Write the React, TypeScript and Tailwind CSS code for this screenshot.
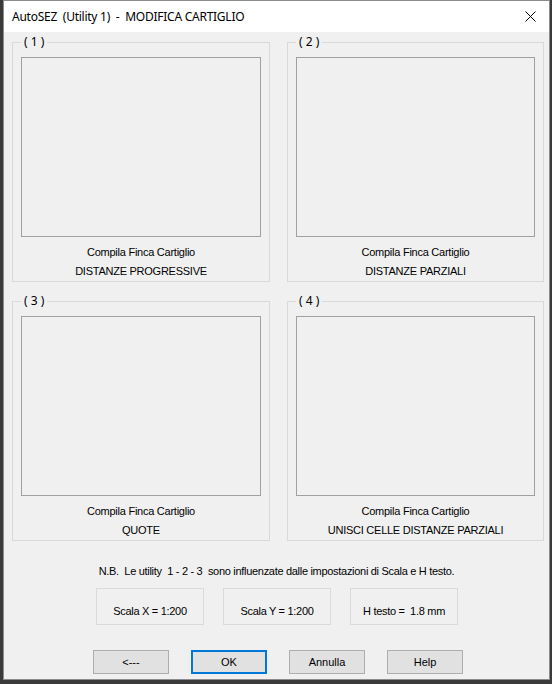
import React from "react";

const ui = { fontFamily: '"Liberation Sans", Arial, sans-serif' };
const title = { fontFamily: '"Noto Sans", "Open Sans", sans-serif' };

function Group({ n, line2 }: { n: string; line2: string }) {
  return (
    <div className="relative border border-[#d9d9d9] pt-[14px] pb-0 px-[8px] flex flex-col">
      <div
        className="absolute left-[8px] -top-[9px] px-[3px] bg-[#f0f0f0] text-[12px] leading-[16px] text-black whitespace-pre"
        style={title}
      >
        {`( ${n} )`}
      </div>
      <div className="h-[180px] border border-[#a0a0a0] bg-[#f0f0f0]" />
      <div className="mt-[6px] flex flex-col items-center text-[11px] leading-[19px] tracking-[-0.25px] text-black" style={ui}>
        <div>Compila Finca Cartiglio</div>
        <div>{line2}</div>
      </div>
    </div>
  );
}

function InfoBox({ children }: { children: React.ReactNode }) {
  return (
    <div className="w-[108px] h-[37px] border border-[#dadada] flex justify-center pt-[14px] text-[11px] leading-[16px] tracking-[-0.3px] text-black whitespace-pre" style={ui}>
      {children}
    </div>
  );
}

function Btn({ children, active }: { children: React.ReactNode; active?: boolean }) {
  return (
    <div
      className={
        active
          ? "w-[76px] h-[24px] border-2 border-[#0078d7] bg-[#e1e1e1] flex items-center justify-center text-[11px] text-black"
          : "w-[76px] h-[24px] border border-[#adadad] bg-[#e1e1e1] flex items-center justify-center text-[11px] text-black"
      }
      style={ui}
    >
      {children}
    </div>
  );
}

export default function App() {
  return (
    <div className="w-[552px] h-[684px] bg-[#3a3a3a] pl-[3px] pr-[2px] pb-[4px] flex flex-col">
      <div className="flex-1 border border-[#8c8c8c] flex flex-col bg-[#f0f0f0]">
        <div className="h-[31px] bg-white flex items-center pl-[8px] pr-[9px] shrink-0">
          <div className="text-[12px] leading-[16px] tracking-[-0.25px] text-black whitespace-pre" style={title}>
            {"AutoSEZ  (Utility 1)  -  MODIFICA CARTIGLIO"}
          </div>
          <div className="ml-auto w-[20px] h-[20px] flex items-center justify-center">
            <svg width="11" height="11" viewBox="0 0 11 11">
              <path d="M0.5 0.5 L10.5 10.5 M10.5 0.5 L0.5 10.5" stroke="#000" strokeWidth="1" />
            </svg>
          </div>
        </div>
        <div className="flex-1 flex flex-col pt-[10px]">
          <div className="pl-[8px] grid grid-cols-[258px_257px] gap-x-[17px] gap-y-[19px]">
            <Group n="1" line2="DISTANZE PROGRESSIVE" />
            <Group n="2" line2="DISTANZE PARZIALI" />
            <Group n="3" line2="QUOTE" />
            <Group n="4" line2="UNISCI CELLE DISTANZE PARZIALI" />
          </div>
          <div className="mt-[22px] text-center text-[11px] leading-[16px] tracking-[-0.3px] text-black whitespace-pre" style={ui}>
            {"N.B.  Le utility  1 - 2 - 3  sono influenzate dalle impostazioni di Scala e H testo."}
          </div>
          <div className="mt-[9px] flex justify-center gap-[19px] pl-[1px]">
            <InfoBox>{"Scala X = 1:200"}</InfoBox>
            <InfoBox>{"Scala Y = 1:200"}</InfoBox>
            <InfoBox>{"H testo =  1.8 mm"}</InfoBox>
          </div>
          <div className="mt-[25px] flex justify-center gap-[22px] pl-[3px]">
            <Btn>{"<---"}</Btn>
            <Btn active>OK</Btn>
            <Btn>Annulla</Btn>
            <Btn>Help</Btn>
          </div>
        </div>
      </div>
    </div>
  );
}
